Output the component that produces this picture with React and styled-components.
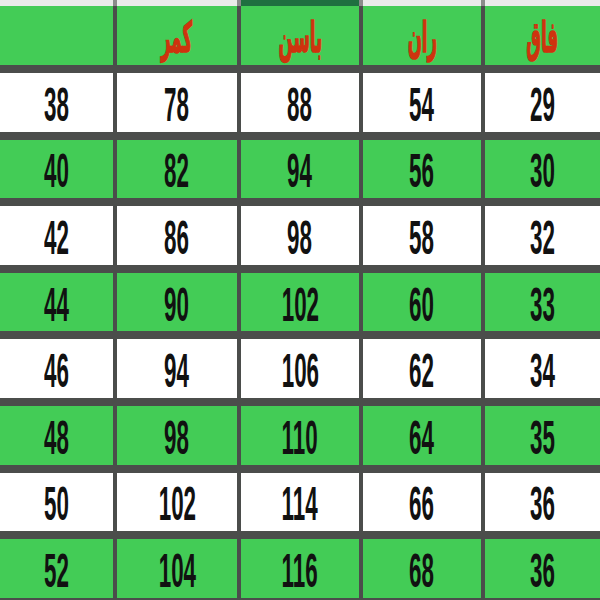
import React from 'react';
import styled, { createGlobalStyle } from 'styled-components';

const GlobalStyle = createGlobalStyle`
  html, body {
    margin: 0;
    padding: 0;
    background: #ffffff;
    overflow: hidden;
  }
`;

const COLS = '113px 120px 118px 118px 115px';

const Page = styled.div`
  width: 600px;
  height: 600px;
  display: flex;
  flex-direction: column;
  background: #4b4d4b;
  overflow: hidden;
`;

const TopStrip = styled.div`
  display: grid;
  flex-shrink: 0;
  grid-template-columns: ${COLS};
  column-gap: 4px;
  height: 6px;
  background: #8a8c8a;
`;

const StripCell = styled.div`
  background: ${(p) => (p.$active ? '#1f7040' : '#e9ebe9')};
`;

const Table = styled.div`
  display: grid;
  flex-shrink: 0;
  grid-template-columns: ${COLS};
  grid-template-rows: 59px repeat(8, 58.6px);
  column-gap: 4px;
  row-gap: 8px;
`;

const Cell = styled.div`
  display: flex;
  align-items: center;
  justify-content: center;
  background: ${(p) => (p.$green ? '#43cc56' : '#ffffff')};
`;

const Num = styled.span`
  display: inline-block;
  font-family: 'Liberation Sans', Arial, sans-serif;
  font-weight: 700;
  font-size: 28px;
  line-height: 1;
  color: #111111;
  transform: scale(0.8, 1.75);
  margin-top: 5px;
`;

const Label = styled.span`
  display: inline-block;
  font-family: 'DejaVu Sans', sans-serif;
  font-weight: 700;
  font-size: 23px;
  line-height: 1.3;
  color: #cf330e;
  -webkit-text-stroke: 0.9px #cf330e;
  transform: scale(0.72, 1.85);
  direction: rtl;
  margin-top: 6px;
`;

const headers = ['', 'کمر', 'باسن', 'ران', 'فاق'];

const rows = [
  [38, 78, 88, 54, 29],
  [40, 82, 94, 56, 30],
  [42, 86, 98, 58, 32],
  [44, 90, 102, 60, 33],
  [46, 94, 106, 62, 34],
  [48, 98, 110, 64, 35],
  [50, 102, 114, 66, 36],
  [52, 104, 116, 68, 36],
];

export default function App() {
  return (
    <Page>
      <GlobalStyle />
      <TopStrip>
        <StripCell />
        <StripCell />
        <StripCell $active />
        <StripCell />
        <StripCell />
      </TopStrip>
      <Table>
        {headers.map((h, i) => (
          <Cell key={'h' + i} $green>
            {h && <Label>{h}</Label>}
          </Cell>
        ))}
        {rows.map((row, r) =>
          row.map((v, c) => (
            <Cell key={r + '-' + c} $green={r % 2 === 1}>
              <Num>{v}</Num>
            </Cell>
          ))
        )}
      </Table>
    </Page>
  );
}
